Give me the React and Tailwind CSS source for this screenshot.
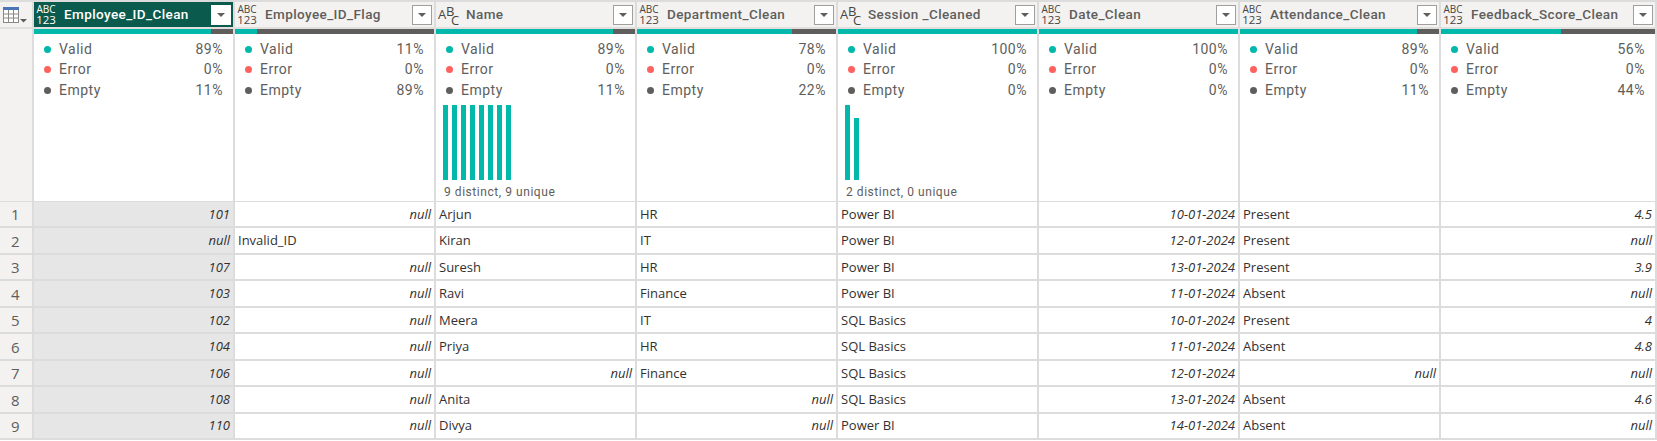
import React from 'react';

const columns = [
  { name: 'Employee_ID_Clean', type: 'any', valid: 89, empty: 11, active: true },
  { name: 'Employee_ID_Flag', type: 'any', valid: 11, empty: 89 },
  { name: 'Name', type: 'text', valid: 89, empty: 11, bars: [75, 75, 75, 75, 75, 75, 75, 75], note: '9 distinct, 9 unique' },
  { name: 'Department_Clean', type: 'any', valid: 78, empty: 22 },
  { name: 'Session _Cleaned', type: 'text', valid: 100, empty: 0, bars: [75, 62], note: '2 distinct, 0 unique' },
  { name: 'Date_Clean', type: 'any', valid: 100, empty: 0 },
  { name: 'Attendance_Clean', type: 'any', valid: 89, empty: 11 },
  { name: 'Feedback_Score_Clean', type: 'any', valid: 56, empty: 44 },
];

const N = { v: 'null', n: true };
const I = (v) => ({ v, n: true });

const rows = [
  [I('101'), N, 'Arjun', 'HR', 'Power BI', I('10-01-2024'), 'Present', I('4.5')],
  [N, 'Invalid_ID', 'Kiran', 'IT', 'Power BI', I('12-01-2024'), 'Present', N],
  [I('107'), N, 'Suresh', 'HR', 'Power BI', I('13-01-2024'), 'Present', I('3.9')],
  [I('103'), N, 'Ravi', 'Finance', 'Power BI', I('11-01-2024'), 'Absent', N],
  [I('102'), N, 'Meera', 'IT', 'SQL Basics', I('10-01-2024'), 'Present', I('4')],
  [I('104'), N, 'Priya', 'HR', 'SQL Basics', I('11-01-2024'), 'Absent', I('4.8')],
  [I('106'), N, N, 'Finance', 'SQL Basics', I('12-01-2024'), N, N],
  [I('108'), N, 'Anita', N, 'SQL Basics', I('13-01-2024'), 'Absent', I('4.6')],
  [I('110'), N, 'Divya', N, 'Power BI', I('14-01-2024'), 'Absent', N],
];

const gridCols = 'grid grid-cols-[34px_repeat(7,201px)_1fr]';

const TypeIcon = ({ type, active }) => {
  if (type === 'text') {
    return (
      <div className="relative w-[20px] h-[20px] shrink-0 text-[#484644] font-['Open_Sans',sans-serif] text-[13px] leading-none">
        <span className="absolute left-0 top-[3.5px]">A</span>
        <span className="absolute left-[8px] top-[0.5px]">B</span>
        <span className="absolute left-[13px] top-[9px]">C</span>
      </div>
    );
  }
  return (
    <div className={`w-[20px] shrink-0 text-center font-['Open_Sans',sans-serif] ${active ? 'text-white' : 'text-[#484644]'}`}>
      <div className="text-[10px] leading-[10px]">ABC</div>
      <div className="text-[11.5px] leading-[11px]">123</div>
    </div>
  );
};

const Dropdown = ({ active }) => (
  <div className={`ml-auto w-[20px] h-[20px] shrink-0 flex items-center justify-center bg-white border ${active ? 'border-white' : 'border-[#a19f9d]'}`}>
    <div className="w-0 h-0 border-x-[4px] border-x-transparent border-t-[4px] border-t-[#605e5c]" />
  </div>
);

const HeaderCell = ({ col }) => (
  <div className={`h-[25px] flex items-center pl-[2px] pr-[2px] border-r-2 border-[#dcdcdc] ${col.active ? 'bg-[#0b5a4e]' : 'bg-[#f3f2f1]'}`}>
    <TypeIcon type={col.type} active={col.active} />
    <span className={`ml-[8px] font-['Roboto',sans-serif] text-[13.5px] font-medium tracking-[0.4px] whitespace-nowrap ${col.active ? 'text-white' : 'text-[#605e5c]'}`}>
      {col.name}
    </span>
    <Dropdown active={col.active} />
  </div>
);

const Stat = ({ color, label, value }) => (
  <div className="flex items-center h-[20.5px] px-[10px]">
    <span className="w-[7px] h-[7px] rounded-full" style={{ backgroundColor: color }} />
    <span className="ml-[8px]">{label}</span>
    <span className="ml-auto">{value}%</span>
  </div>
);

const ProfileCell = ({ col }) => (
  <div className="h-[172px] bg-white border-r-2 border-[#dcdcdc] flex flex-col font-['Roboto',sans-serif] text-[14px] tracking-[0.5px] text-[#605e5c]">
    <div className="flex h-[5px]">
      <div className="bg-[#01b8aa]" style={{ width: `${col.valid}%` }} />
      <div className="flex-1 bg-[#605e5c]" />
    </div>
    <div className="mt-[4.75px]">
      <Stat color="#01b8aa" label="Valid" value={col.valid} />
      <Stat color="#fd625e" label="Error" value={0} />
      <Stat color="#605e5c" label="Empty" value={col.empty} />
    </div>
    {col.bars && (
      <div className="mt-[4.75px] pl-[7px]">
        <div className="h-[75px] flex items-end gap-[4px]">
          {col.bars.map((h, i) => (
            <div key={i} className="w-[5px] bg-[#01b8aa]" style={{ height: `${h}px` }} />
          ))}
        </div>
        <div className="mt-[4px] text-[12px] tracking-[0.55px] leading-[16px] pl-[1px] whitespace-nowrap">{col.note}</div>
      </div>
    )}
  </div>
);

const DataCell = ({ value, first }) => {
  const isItalic = typeof value === 'object';
  return (
    <div
      className={`h-[26.44px] pt-[1px] border-b-2 border-r-2 border-[#dcdcdc] flex items-center px-[3px] text-[13px] text-[#323130] whitespace-nowrap ${
        isItalic ? 'justify-end italic' : ''
      } ${first ? 'bg-[#e6e6e6]' : 'bg-white'}`}
    >
      {isItalic ? value.v : value}
    </div>
  );
};

export default function App() {
  return (
    <div className="w-[1657px] h-[441px] overflow-hidden bg-white font-['Open_Sans',sans-serif] border-t-2 border-[#dcdcdc]">
      <div className={`${gridCols} bg-[#f3f2f1] border-b-2 border-[#e1dfdd]`}>
        <div className="h-[25px] border-r-2 border-[#dcdcdc] flex items-center pl-[3px]">
          <svg width="24" height="16" viewBox="0 0 24 16">
            <rect x="0.5" y="0.5" width="15" height="15" fill="#fff" stroke="#8a8886" />
            <rect x="0" y="0" width="16" height="3" fill="#4a76b8" />
            <path d="M5.5 3v12M10.5 3v12M1 7h14M1 11h14" stroke="#8a8886" fill="none" />
            <path d="M17 12h7l-3.5 3.5z" fill="#605e5c" />
          </svg>
        </div>
        {columns.map((c) => (
          <HeaderCell key={c.name} col={c} />
        ))}
      </div>
      <div className={gridCols}>
        <div className="h-[172px] bg-[#f3f2f1] border-r-2 border-[#dcdcdc]" />
        {columns.map((c) => (
          <ProfileCell key={c.name} col={c} />
        ))}
      </div>
      <div className={`${gridCols} border-t border-[#dcdcdc]`}>
        {rows.map((row, i) => (
          <React.Fragment key={i}>
            <div className="h-[26.44px] pt-[1px] bg-[#f3f2f1] border-b-2 border-r-2 border-[#dcdcdc] flex items-center pl-[11px] text-[15px] text-[#605e5c]">
              {i + 1}
            </div>
            {row.map((v, j) => (
              <DataCell key={j} value={v} first={j === 0} />
            ))}
          </React.Fragment>
        ))}
      </div>
    </div>
  );
}
